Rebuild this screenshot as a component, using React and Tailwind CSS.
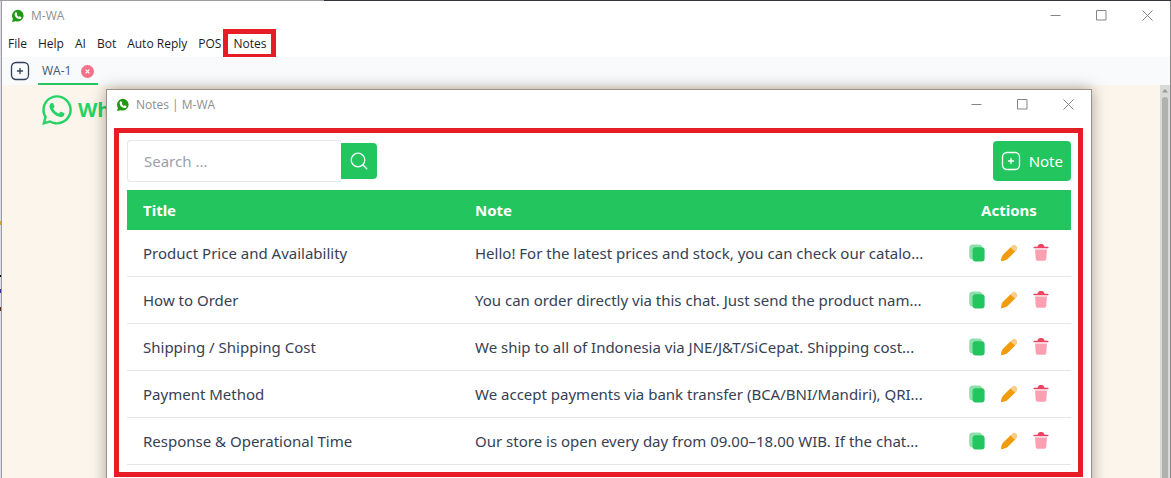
import { FaWhatsapp } from "react-icons/fa";

const notes = [
  ["Product Price and Availability", "Hello! For the latest prices and stock, you can check our catalo..."],
  ["How to Order", "You can order directly via this chat. Just send the product nam..."],
  ["Shipping / Shipping Cost", "We ship to all of Indonesia via JNE/J&T/SiCepat. Shipping cost..."],
  ["Payment Method", "We accept payments via bank transfer (BCA/BNI/Mandiri), QRI..."],
  ["Response & Operational Time", "Our store is open every day from 09.00–18.00 WIB. If the chat..."],
];

const menus = ["File", "Help", "AI", "Bot", "Auto Reply", "POS"];

function AppIcon() {
  return (
    <svg viewBox="0 0 14 14" className="size-3.5" aria-hidden="true">
      <path d="M7.200.8a5.900 5.900 0 1 1-2.600 11.400L1 13l.9-3.200A5.900 5.900 0 0 1 7.200.8z" fill="#1f9a12" />
      <path
        d="M4.600 3.300c.5-.3.9-.1 1.100.4l.5 1.100c.1.3 0 .5-.5 1 .5.9 1.200 1.600 2.200 2.100.5-.6.7-.8 1-.6l1.200.6c.4.2.5.5.3 1-.3.9-1.100 1.300-2 1.200-2.600-.4-4.700-2.600-4.800-4.900 0-.8.4-1.500 1-1.900z"
        fill="#fff"
      />
    </svg>
  );
}

function PlusSquare({ className }) {
  return (
    <svg viewBox="0 0 20 20" className={className} fill="none" stroke="currentColor" strokeWidth="1.300" strokeLinecap="round" aria-hidden="true">
      <rect x="1.500" y="1.500" width="17" height="17" rx="4.500" />
      <path d="M10 7.500v5M7.500 10h5" />
    </svg>
  );
}

function WindowControls() {
  return (
    <div className="flex gap-4 pr-2 text-[#858585]">
      <button aria-label="Minimize" className="flex w-[30px] justify-center">
        <svg viewBox="0 0 11 11" className="size-[11px]" stroke="currentColor"><path d="M.5 5.500h10" /></svg>
      </button>
      <button aria-label="Maximize" className="flex w-[30px] justify-center">
        <svg viewBox="0 0 11 11" className="size-[11px]" fill="none" stroke="currentColor"><path d="M.5.500h9.500v9.500h-9.500z" /></svg>
      </button>
      <button aria-label="Close" className="flex w-[30px] justify-center">
        <svg viewBox="0 0 11 11" className="size-[11px]" stroke="currentColor"><path d="M.5.500l10 10M10.500.500l-10 10" /></svg>
      </button>
    </div>
  );
}

function TitleBar({ title }) {
  return (
    <header className="flex h-7 items-center justify-between pt-px pl-[9px]">
      <div className="flex items-center gap-1.5 text-xs text-[#8e8e8e]">
        <AppIcon />
        <span>{title}</span>
      </div>
      <WindowControls />
    </header>
  );
}

function CopyIcon() {
  return (
    <svg viewBox="0 0 16 18" className="h-[18px] w-4" aria-hidden="true">
      <rect x=".2" y=".5" width="13" height="15" rx="3.500" fill="#8ddfab" />
      <rect x="3.600" y="3.300" width="12" height="14.200" rx="3" fill="#22c55e" />
    </svg>
  );
}

function PencilIcon() {
  return (
    <svg viewBox="0 0 16 18" className="h-[18px] w-4" aria-hidden="true">
      <path d="M9.600 3.200 2 10.800C1 11.900.1 14.500 0 16.400c0 .5.300.8.800.8 2.300-.2 4.800-1.100 5.800-2.100l7.600-7.600z" fill="#f19c0c" />
      <path d="m9.600 3.200 1.500-1.500a3.200 3.200 0 0 1 4.500 4.500l-1.400 1.300z" fill="#f9cd88" />
    </svg>
  );
}

function TrashIcon() {
  return (
    <svg viewBox="0 0 16 18" className="h-[18px] w-4" aria-hidden="true">
      <path d="M2.100 5.400h11.800l-.6 9.100c-.2 1.600-.8 2.300-2.300 2.300H5c-1.500 0-2.100-.7-2.300-2.300z" fill="#fb9fb1" />
      <path d="M1.200 2.700h3.300C5.200 1 5.900.1 7.100.1h1.800c1.200 0 1.900.9 2.600 2.600h3.300a.8.8 0 0 1 0 1.600H1.200a.8.8 0 0 1 0-1.600z" fill="#ee4260" />
    </svg>
  );
}

function NotesWindow() {
  return (
    <section
      aria-label="Notes"
      className="absolute inset-x-0 top-1 mr-[78px] ml-[104px] h-screen border border-[#9c9287] bg-white shadow-[0_0_14px_rgba(0,0,0,0.35)]"
    >
      <TitleBar title="Notes | M-WA" />
      <div className="mt-2.5 mr-2 ml-[7px] border-[5px] border-[#e71d25] py-[7px] pr-[7px] pl-2 font-['Noto_Sans',sans-serif] text-[15px]">
        <div className="flex items-center justify-between">
          <form className="flex items-center" onSubmit={(e) => e.preventDefault()}>
            <input
              type="text"
              aria-label="Search notes"
              placeholder="Search ..."
              className="h-[42px] w-[214px] rounded-l border border-r-0 border-gray-200 px-4 outline-none placeholder:text-gray-400"
            />
            <button aria-label="Search" className="flex size-9 items-center justify-center rounded-r bg-[#22c55e] text-white">
              <svg viewBox="0 0 18 18" className="size-[18px]" fill="none" stroke="currentColor" strokeWidth="1.300" strokeLinecap="round" aria-hidden="true">
                <circle cx="8" cy="8" r="6.800" />
                <path d="m13 13 3.800 3.800" />
              </svg>
            </button>
          </form>
          <button className="flex h-10 items-center gap-2 rounded bg-[#22c55e] px-2 text-white">
            <PlusSquare className="size-5" />
            Note
          </button>
        </div>
        <table className="mt-2 w-full table-fixed border-separate border-spacing-0 text-left text-gray-700">
          <thead className="bg-[#22c55e] text-white">
            <tr className="h-10">
              <th className="w-[332px] px-4 font-bold">Title</th>
              <th className="px-4 font-bold">Note</th>
              <th className="w-[124px] px-4 text-center font-bold">Actions</th>
            </tr>
          </thead>
          <tbody>
            {notes.map(([title, text]) => (
              <tr key={title} className="h-[47px]">
                <td className="border-b border-gray-200 px-4">{title}</td>
                <td className="border-b border-gray-200 px-4 whitespace-nowrap">{text}</td>
                <td className="border-b border-gray-200">
                  <div className="flex justify-center gap-4">
                    <button aria-label={`Copy ${title}`}><CopyIcon /></button>
                    <button aria-label={`Edit ${title}`}><PencilIcon /></button>
                    <button aria-label={`Delete ${title}`}><TrashIcon /></button>
                  </div>
                </td>
              </tr>
            ))}
          </tbody>
        </table>
      </div>
    </section>
  );
}

function DesktopEdge() {
  return (
    <div className="flex w-0.5 shrink-0 flex-col border-r border-[#9b9ba0] bg-[#dcdce6]" aria-hidden="true">
      <div className="mt-[220px] h-1 bg-[#d9a03c]" />
      <div className="mt-[50px] h-0.5 bg-black" />
      <div className="mt-3 h-1 bg-[#3a2fa0]" />
      <div className="mt-3.5 h-1 bg-[#5a2a18]" />
    </div>
  );
}

export default function App() {
  return (
    <div className="flex h-screen flex-col overflow-hidden bg-white font-['Open_Sans',sans-serif]">
      <div className="flex h-px shrink-0 bg-[#35323a]">
        <div className="w-[324px] bg-[#9b9ba0]" />
      </div>
      <div className="flex flex-1">
        <DesktopEdge />
        <div className="flex flex-1 flex-col border-r border-[#8a8a8a]">
          <TitleBar title="M-WA" />
          <nav className="flex h-7 items-center pt-0.5 pl-1.5 text-xs text-[#1b1b1b]">
            <div className="flex gap-[11px]">
              {menus.map((m) => (
                <button key={m}>{m}</button>
              ))}
            </div>
            <button className="ml-0.5 flex h-[30px] w-[53px] shrink-0 items-center justify-center border-[5px] border-[#e71d25]">Notes</button>
          </nav>
          <div className="flex h-7 items-center gap-2 bg-[#f8fafc] pl-2 text-xs text-slate-600">
            <button aria-label="New tab" className="text-slate-700">
              <PlusSquare className="size-5" />
            </button>
            <div className="flex h-7 items-center gap-2.5 border-b-2 border-[#22c55e] px-1 pt-0.5">
              <button>WA-1</button>
              <button aria-label="Close WA-1">
                <svg viewBox="0 0 12 12" className="size-[13px]" aria-hidden="true">
                  <circle cx="6" cy="6" r="6" fill="#f6708a" />
                  <path d="m4.300 4.300 3.400 3.400m0-3.400L4.300 7.700" stroke="#fff" strokeWidth="1.200" />
                </svg>
              </button>
            </div>
          </div>
          <main className="relative flex flex-1 justify-between bg-[#fcf5eb]">
            <div className="flex h-[50px] items-center gap-1 pl-[38px] text-[#25d366]">
              <FaWhatsapp className="size-[34px]" aria-hidden="true" />
              <span className="text-xl font-bold">Wh</span>
            </div>
            <div className="flex w-2.5 flex-col items-center bg-[#d9d9d7]">
              <svg viewBox="0 0 10 12" className="h-3 w-2.5" aria-hidden="true"><path d="M2 7.500 5 4l3 3.500z" fill="#999" /></svg>
              <div className="w-1.5 flex-1 rounded-t-full bg-[#b0b0ae]" />
            </div>
            <NotesWindow />
          </main>
        </div>
      </div>
    </div>
  );
}
